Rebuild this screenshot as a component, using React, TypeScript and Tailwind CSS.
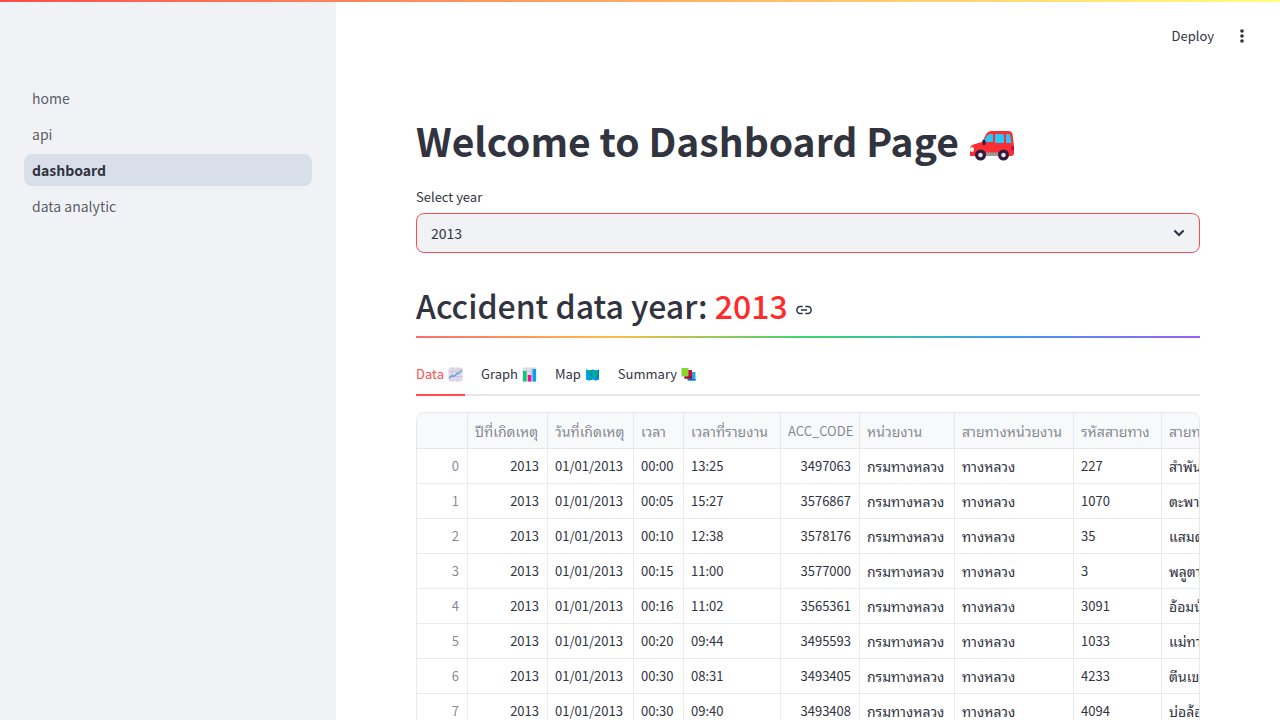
import { useState } from "react";
import type { ReactNode } from "react";

const pages = ["home", "api", "dashboard", "data analytic"];

const columns = [
  { label: "", width: "w-[51px]" },
  { label: "ปีที่เกิดเหตุ", width: "w-20" },
  { label: "วันที่เกิดเหตุ", width: "w-[86px]" },
  { label: "เวลา", width: "w-[50px]" },
  { label: "เวลาที่รายงาน", width: "w-[97px]" },
  { label: "ACC_CODE", width: "w-[79px]" },
  { label: "หน่วยงาน", width: "w-[95px]" },
  { label: "สายทางหน่วยงาน", width: "w-[119px]" },
  { label: "รหัสสายทาง", width: "w-[88px]" },
  { label: "สายทาง", width: "w-[160px]" },
];

const rows = [
  ["00:00", "13:25", "3497063", "227", "สำพันตา"],
  ["00:05", "15:27", "3576867", "1070", "ตะพานหิน"],
  ["00:10", "12:38", "3578176", "35", "แสมดำ"],
  ["00:15", "11:00", "3577000", "3", "พลูตาหลวง"],
  ["00:16", "11:02", "3565361", "3091", "อ้อมน้อย"],
  ["00:20", "09:44", "3495593", "1033", "แม่ทา"],
  ["00:30", "08:31", "3493405", "4233", "ตีนเขา"],
  ["00:30", "09:40", "3493408", "4094", "บ่อล้อ"],
  ["00:30", "10:12", "3493412", "4", "ท่าแซะ"],
  ["00:35", "10:45", "3493420", "41", "ทุ่งสง"],
];

function CarIcon() {
  return (
    <svg viewBox="0 0 46 32" className="mt-2 h-8 w-[46px]" aria-hidden="true">
      <path d="M1 27V20Q1 16 6 15L13 13L17.500 4.500Q19 2 22 2H39Q43 2 43.500 5L45 17V24Q45 27 42 27Z" fill="#f92f33" />
      <path d="M13.500 13L18.500 6.500Q19.500 5 21 5H23Q24 5 24 6V13Z" fill="#26c9fc" />
      <path d="M26 6Q26 5 27 5H33Q35 5 35 7V13Q35 14 34 14H27Q26 14 26 13ZM37 6Q37 5 38 5H39.500Q41 5 41.300 7L42.500 14H38Q37 14 37 13Z" fill="#26c9fc" />
      <path d="M17 23.500H29V27H17Z" fill="#9b9b9b" />
      <rect x="13.500" y="11" width="3" height="5" rx="1" fill="#321b41" />
      <rect x="1" y="18" width="4" height="5" rx="2" fill="#f4f4f4" />
      <path d="M45 17H43Q41 19 43 21.500H45Z" fill="#ca0b4a" />
      <circle cx="11.500" cy="26" r="5.500" fill="#321b41" />
      <circle cx="34.500" cy="26" r="5.500" fill="#321b41" />
      <circle cx="11.500" cy="26" r="2.300" fill="#e6e6e6" />
      <circle cx="34.500" cy="26" r="2.300" fill="#e6e6e6" />
    </svg>
  );
}

function Grid() {
  return (
    <>
      <rect x=".5" y=".5" width="14" height="14" rx="1.500" fill="#e1d8ec" />
      <path d="M.5 4.500H14.500M.5 9.500H14.500M4.500.5V14.500M9.500.5V14.500" stroke="#cdc4d6" strokeWidth=".8" />
    </>
  );
}

function TabIcon({ children }: { children: ReactNode }) {
  return (
    <svg viewBox="0 0 17 15" className="h-[15px] w-[17px]" aria-hidden="true">
      {children}
    </svg>
  );
}

const tabs = [
  {
    name: "Data",
    icon: (
      <TabIcon>
        <Grid />
        <path d="M1 11.500L4 8.500L6 9.500L9.500 6L11 6.500L14 2.500" fill="none" stroke="#4fa3e0" strokeWidth="1.200" strokeLinejoin="round" />
      </TabIcon>
    ),
  },
  {
    name: "Graph",
    icon: (
      <TabIcon>
        <Grid />
        <path d="M1 4H4.500V14.500H1Z" fill="#00d26a" />
        <path d="M5.800 8H9.300V14.500H5.800Z" fill="#f70a8d" />
        <path d="M10.500 2H14V14.500H10.500Z" fill="#00a6ed" />
      </TabIcon>
    ),
  },
  {
    name: "Map",
    icon: (
      <TabIcon>
        <path d="M1 2.500L4.500 3.500L7.500 2.500L10.800 3.500L14 2.500V12.500L10.800 13.500L7.500 12.500L4.500 13.500L1 12.500Z" fill="#0084ce" />
        <path d="M1 2.500L4.500 3.500V13.500L1 12.500ZM7.500 2.500L10.800 3.500V13.500L7.500 12.500Z" fill="#00a6ed" />
        <path d="M3 3L7.500 3.500L6.500 6L4.500 7L3 5.500ZM5 8L7.200 9L6.300 12L5 11.500ZM9 4L12.500 3.500V7L11.500 9.500L10.500 11.500L9 8.500L8.500 6Z" fill="#00b26a" />
      </TabIcon>
    ),
  },
  {
    name: "Summary",
    icon: (
      <TabIcon>
        <path d="M7.500 5H14.500V13.500H7.500Z" fill="#26a9ea" />
        <path d="M6.500 12H14.500V13.500H6.500Z" fill="#0074ba" />
        <path d="M3.500 3H11V11.500H3.500Z" fill="#ca0b4a" />
        <path d="M3.500 9.500H11V11.500H3.500Z" fill="#990838" />
        <path d="M.5 1H7.500V9.500H.5Z" fill="#86d72f" />
      </TabIcon>
    ),
  },
];

export default function App() {
  const [tab, setTab] = useState("Data");
  const [year, setYear] = useState("2013");

  return (
    <div className="flex h-screen overflow-hidden bg-white font-['Noto_Sans_CJK_SC','Noto_Sans_Thai_Looped',sans-serif] text-[#31333f]">
      <div className="absolute inset-x-0 top-0 z-10 h-0.5 bg-linear-to-r from-[#ff4b4b] to-[#fffd80]" />
      <aside className="w-84 shrink-0 bg-[#f0f2f6] px-6 pt-[82px]">
        <nav className="flex flex-col gap-1">
          {pages.map((page) => (
            <a
              key={page}
              href={`#${page.replace(" ", "-")}`}
              aria-current={page === "dashboard" ? "page" : undefined}
              className={
                page === "dashboard"
                  ? "rounded-lg bg-[#d9dfe9] px-2 text-[14px] leading-8 font-bold"
                  : "rounded-lg px-2 text-[14px] leading-8 text-[#31333f]/80"
              }
            >
              {page}
            </a>
          ))}
        </nav>
      </aside>

      <div className="min-w-0 flex-1 overflow-y-auto [scrollbar-width:none]">
        <header className="flex h-[72px] items-center justify-end gap-3.5 pr-6">
          <button type="button" className="text-[13px] leading-5">
            Deploy
          </button>
          <button type="button" aria-label="Main menu" className="flex w-7 justify-center">
            <svg viewBox="0 0 24 24" className="size-5" fill="currentColor" aria-hidden="true">
              <circle cx="12" cy="6" r="2.200" />
              <circle cx="12" cy="12" r="2.200" />
              <circle cx="12" cy="18" r="2.200" />
            </svg>
          </button>
        </header>

        <main className="px-20 pt-[42px]">
          <h1 className="flex items-center gap-2.5 text-[39px] leading-[53px] font-bold">
            Welcome to Dashboard Page <CarIcon />
          </h1>

          <label htmlFor="year" className="mt-5 block text-[13px] leading-5">
            Select year
          </label>
          <div className="relative mt-1.5">
            <select
              id="year"
              value={year}
              onChange={(event) => setYear(event.target.value)}
              className="block h-10 w-full appearance-none rounded-lg border border-[#ff4b4b] bg-[#f0f2f6] px-3.5 text-[14px] outline-none"
            >
              <option>2013</option>
              <option>2014</option>
              <option>2015</option>
            </select>
            <svg viewBox="0 0 24 24" className="pointer-events-none absolute top-2.5 right-[11px] size-5" fill="none" stroke="currentColor" strokeWidth="2.600" aria-hidden="true">
              <path d="M6.500 9L12 14.500L17.500 9" />
            </svg>
          </div>

          <h2 className="mt-[31px] flex items-center gap-2 text-[32px] leading-[43px] font-medium">
            <span>
              Accident data year: <span className="text-[#ff2b2b]">{year}</span>
            </span>
            <a href="#accident-data-year" aria-label="Link to heading" className="pt-2">
              <svg viewBox="0 0 18 16" className="h-4 w-4" fill="none" stroke="currentColor" strokeWidth="1.700" aria-hidden="true">
                <path d="M7.500 4H4.500A3.500 4 0 0 0 4.500 12H7.500M10.500 4H13.500A3.500 4 0 0 1 13.500 12H10.500M5.500 8H12.500" />
              </svg>
            </a>
          </h2>
          <div className="mt-[9px] h-0.5 bg-[linear-gradient(to_right,#ff6c6c,#ffbd45,#3dd56d,#3d9df3,#9a5dff)]" />

          <div role="tablist" className="mt-4 flex gap-4 border-b-2 border-[#e8e8ea]">
            {tabs.map(({ name, icon }) => (
              <button
                key={name}
                type="button"
                role="tab"
                aria-selected={tab === name}
                onClick={() => setTab(name)}
                className={
                  tab === name
                    ? "-mb-0.5 flex h-[42px] items-center gap-1 border-b-2 border-[#ff4b4b] text-[13px] text-[#ff4b4b]"
                    : "flex h-10 items-center gap-1 text-[13px]"
                }
              >
                {name} {icon}
              </button>
            ))}
          </div>

          <div className="mt-4 h-[400px] overflow-hidden rounded-lg border border-[#e6e7ea]">
            <table className="w-[905px] table-fixed border-separate border-spacing-0">
              <thead>
                <tr className="h-9 bg-[#f8f9fb] text-[#31333f]/60">
                  {columns.map(({ label, width }) => (
                    <th
                      key={label}
                      scope="col"
                      className={`${width} border-r border-b border-[#e6e7ea] px-[7px] text-left font-normal whitespace-nowrap ${label === "ACC_CODE" ? "text-[13px]" : "text-sm"}`}
                    >
                      {label}
                    </th>
                  ))}
                </tr>
              </thead>
              <tbody className="text-[13px] leading-5 [&_td]:border-r [&_td]:border-b [&_td]:border-[#e9eaec] [&_td]:pr-2 [&_td]:pl-[7px] [&_td]:whitespace-nowrap">
                {rows.map(([time, reported, code, road, route], index) => (
                  <tr key={code} className="h-[35px]">
                    <td className="text-right text-[#31333f]/60">{index}</td>
                    <td className="text-right">2013</td>
                    <td>01/01/2013</td>
                    <td>{time}</td>
                    <td>{reported}</td>
                    <td className="text-right">{code}</td>
                    <td className="text-sm">กรมทางหลวง</td>
                    <td className="text-sm">ทางหลวง</td>
                    <td>{road}</td>
                    <td className="text-sm">{route}</td>
                  </tr>
                ))}
              </tbody>
            </table>
          </div>
        </main>
      </div>
    </div>
  );
}
